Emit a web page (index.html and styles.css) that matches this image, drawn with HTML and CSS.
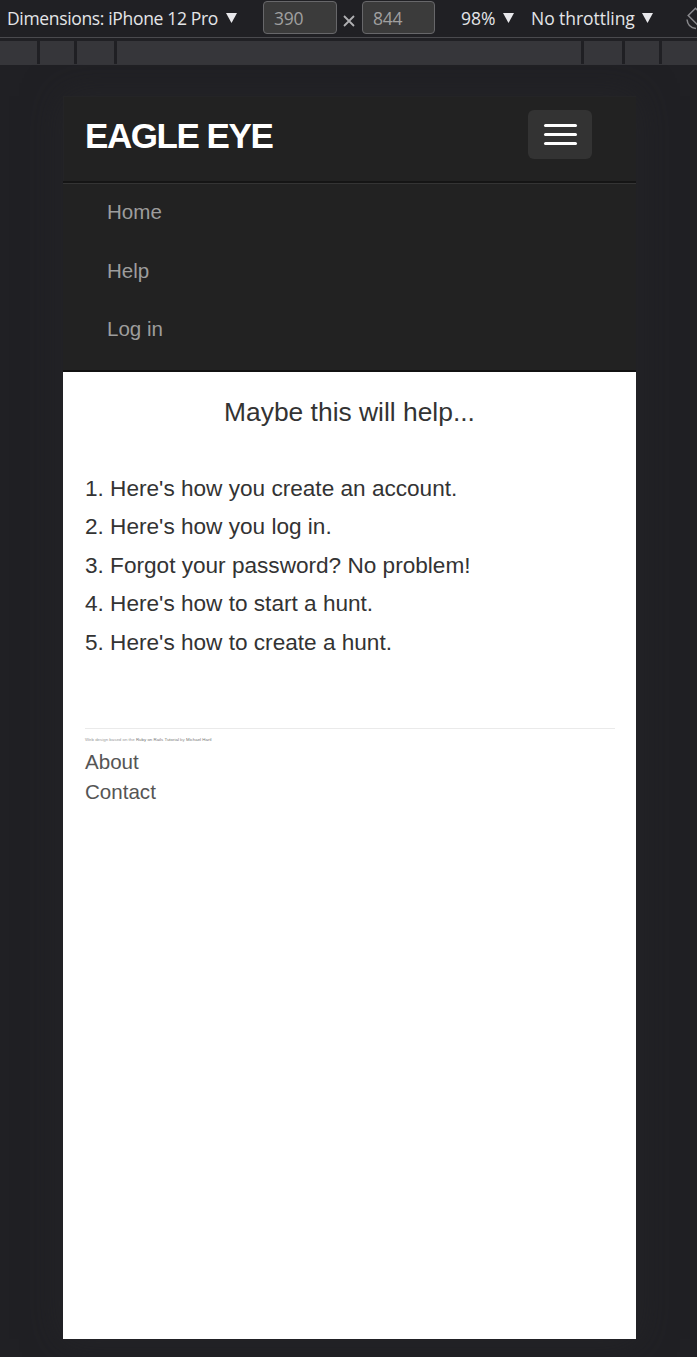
FILE: index.html
```html
<!DOCTYPE html>
<html lang="en">
<head>
<meta charset="utf-8">
<title>Eagle Eye - Help</title>
<link rel="stylesheet" href="styles.css">
</head>
<body>
<header class="toolbar">
  <span class="device">Dimensions: iPhone 12 Pro</span>
  <svg class="caret" viewBox="0 0 11 10"><path d="M0 0h11L5.5 10z"/></svg>
  <span class="size size-w">390</span>
  <svg class="times" viewBox="0 0 12 12"><path d="M1 1l10 10M11 1L1 11"/></svg>
  <span class="size size-h">844</span>
  <span class="zoom">98%</span>
  <svg class="caret" viewBox="0 0 11 10"><path d="M0 0h11L5.5 10z"/></svg>
  <span class="throttle">No throttling</span>
  <svg class="caret" viewBox="0 0 11 10"><path d="M0 0h11L5.5 10z"/></svg>
  <svg class="rotate" viewBox="0 0 24 24"><path d="M9.5 2.2L2.2 9.5 14.5 21.800 21.800 14.500zM1 13.500C1.500 18.500 5 22 10 22.500M14 1.500C19 2 22.500 5.500 23 10.500"/></svg>
</header>
<div class="ruler"><i></i><i></i><i></i><i></i><i></i><i></i><i></i></div>
<main class="stage">
  <div class="screen">
    <nav class="navbar">
      <div class="nav-head">
        <a class="brand">EAGLE EYE</a>
        <button class="toggle" aria-label="Toggle navigation"><i></i><i></i><i></i></button>
      </div>
      <ul class="menu"><li>Home</li><li>Help</li><li>Log in</li></ul>
    </nav>
    <div class="content">
      <h1>Maybe this will help...</h1>
      <ol class="topics">
        <li>1. Here's how you create an account.</li>
        <li>2. Here's how you log in.</li>
        <li>3. Forgot your password? No problem!</li>
        <li>4. Here's how to start a hunt.</li>
        <li>5. Here's how to create a hunt.</li>
      </ol>
      <footer class="footer">
        <small>Web design based on the <b>Ruby on Rails Tutorial</b> by <b>Michael Hartl</b></small>
        <ul><li>About</li><li>Contact</li></ul>
      </footer>
    </div>
  </div>
</main>
</body>
</html>
```
FILE: styles.css
```css
* { box-sizing: border-box; }
body { margin: 0; width: 697px; height: 1357px; overflow: hidden; background: #202024; font-family: "Liberation Sans", Arial, sans-serif; }
ul, ol { list-style: none; margin: 0; padding: 0; }
.toolbar { display: flex; align-items: center; height: 38px; padding-left: 7px; border-bottom: 1px solid #4a4a4e; color: #e4e5e8; font: 17.5px/34px "Open Sans", "Noto Sans", sans-serif; white-space: nowrap; overflow: hidden; }
.toolbar > * { flex: none; }
.toolbar > span { margin-top: -2px; }
.device { width: 219px; letter-spacing: -.34px; }
.caret { width: 11px; height: 10px; fill: #e8e8ec; margin-top: -2px; }
.size { height: 33px; border: 1px solid #67676a; border-radius: 4px; background: #3b3b3b; color: #a0a0a0; padding-left: 10px; line-height: 32px; letter-spacing: -.2px; }
.size-w { width: 74px; margin-left: 26px; }
.size-h { width: 73px; }
.times { width: 12px; height: 12px; margin: 5px 7px 0 6px; stroke: #b0b0b3; stroke-width: 1.8; }
.zoom { width: 42px; margin-left: 26px; }
.throttle { width: 111px; margin-left: 17px; letter-spacing: -.05px; }
.rotate { width: 24px; height: 24px; margin: -1px 0 0 33px; fill: none; stroke: #88888c; stroke-width: 1.5; }
.ruler { display: grid; grid-template-columns: 37px 34px 37px 464px 38px 34px 35px; column-gap: 3px; height: 24px; margin-top: 3px; border-bottom: 1px solid #36363a; }
.ruler i { background: #36363a; }
.stage { padding: 31px 61px 18px 63px; }
.screen { height: 1243px; background: #fff; box-shadow: 0 0 36px rgba(40, 40, 44, .6); }
.navbar { height: 276px; background: #222; border-bottom: 2px solid #111; }
.nav-head { display: flex; justify-content: space-between; height: 87px; padding: 14px 44px 0 22px; border-bottom: 2px solid #151515; box-shadow: inset 1px 1px #242426; }
.brand { color: #fff; font-size: 35px; font-weight: bold; line-height: 51px; letter-spacing: -1.45px; }
.toggle { width: 64px; height: 49px; border: 0; border-radius: 6px; background: #333; padding: 14px 15px 0 16px; display: flex; flex-direction: column; gap: 6px; }
.toggle i { display: block; width: 33px; height: 3px; border-radius: 1.5px; background: #fff; }
.menu { border-top: 1px solid #343434; height: 187px; color: #9d9d9d; font-size: 20.57px; line-height: 29.4px; }
.menu li { height: 58.5px; padding: 13px 0 0 44px; }
.content { padding: 0 21px 0 22px; color: #333; }
h1 { margin: 0; padding: 22px 1px 0 0; font-size: 26.4px; font-weight: normal; line-height: 36px; text-align: center; }
.topics { margin-top: 40px; font-size: 22.6px; line-height: 38.4px; }
.footer { margin-top: 65.5px; border-top: 1px solid #eaeaea; color: #555; }
.footer small { display: block; height: 18px; padding-top: 8px; font-size: 4.4px; line-height: 6px; color: #999; }
.footer b { font-weight: normal; color: #777; }
.footer ul { font-size: 20.57px; line-height: 30px; }
```
